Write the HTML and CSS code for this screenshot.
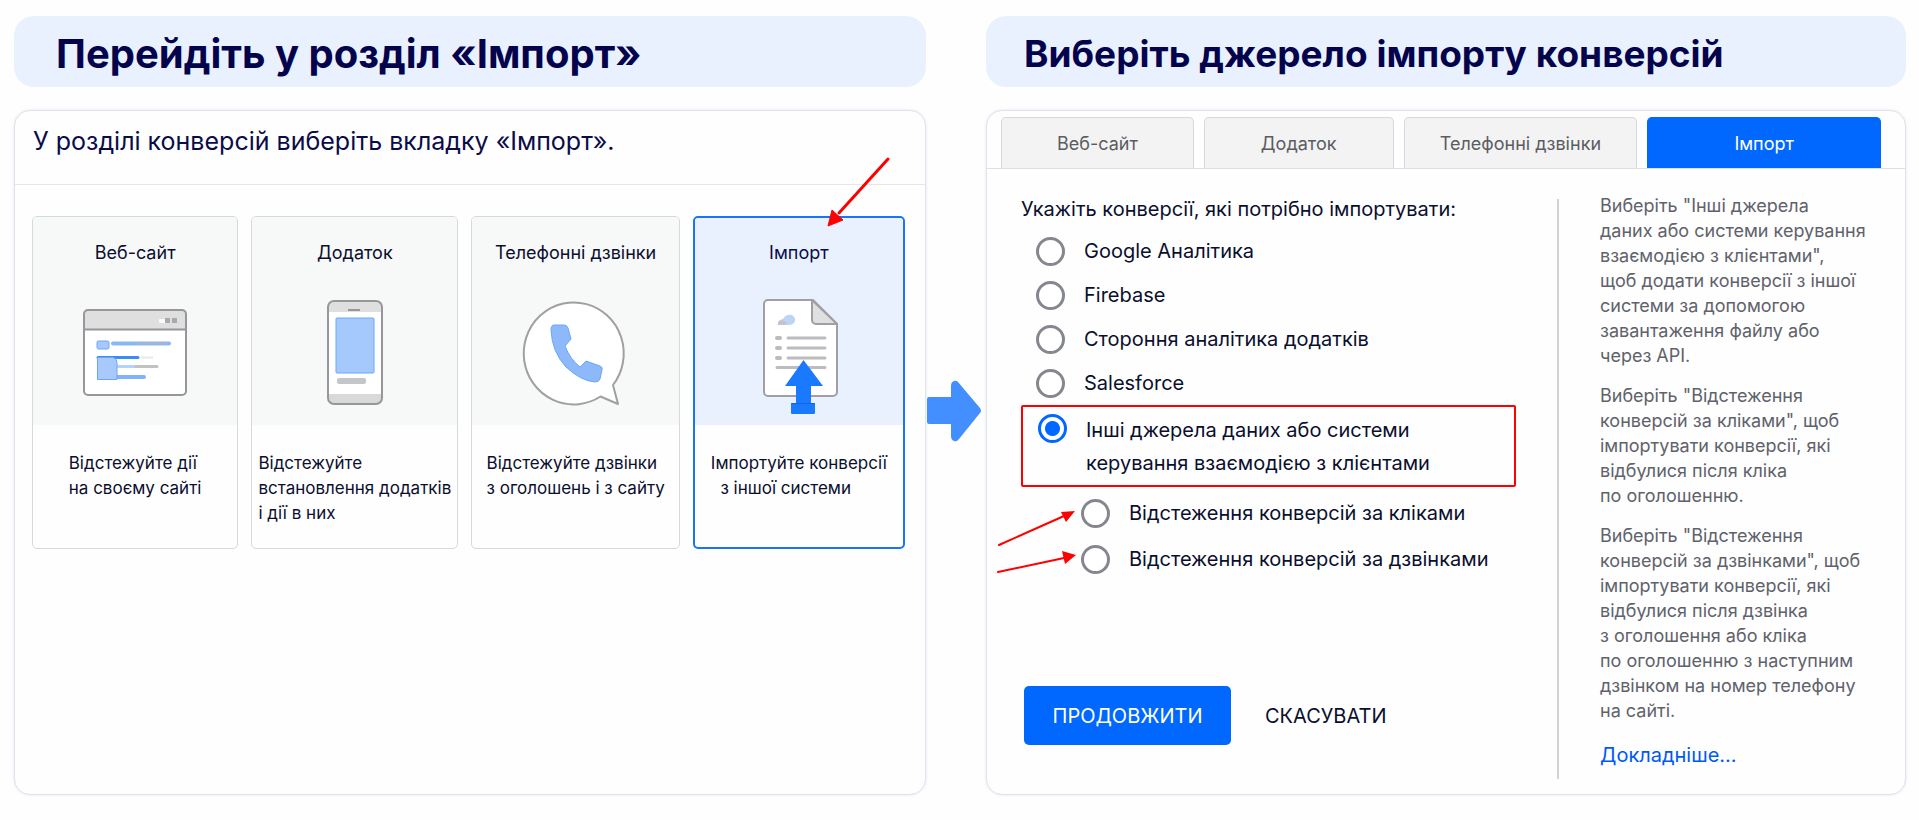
FILE: index.html
```html
<!DOCTYPE html>
<html lang="uk">
<head>
  <meta charset="UTF-8">
  <meta name="viewport" content="width=device-width, initial-scale=1.0">
  <title>Імпорт конверсій</title>
  <link rel="stylesheet" href="styles.css">
</head>
<body>
  <main class="steps">
    <h1 class="banner banner-left">Перейдіть у розділ «Імпорт»</h1>
    <h1 class="banner banner-right">Виберіть джерело імпорту конверсій</h1>

    <!-- Крок 1: вибір типу конверсії -->
    <section class="panel panel-left">
      <p class="panel-intro">У розділі конверсій виберіть вкладку «Імпорт».</p>
      <div class="cards">
        <button type="button" class="card">
          <span class="card-top">
            <span class="card-title">Веб-сайт</span>
            <svg class="card-icon" width="110" height="120" viewBox="0 0 110 120" aria-hidden="true">
              <rect x="4" y="15" width="102" height="85" rx="4" fill="#fff"/>
              <path d="M4 34V19a4 4 0 0 1 4-4h94a4 4 0 0 1 4 4v15z" fill="#dfdfe0"/>
              <rect x="4" y="15" width="102" height="85" rx="4" fill="none" stroke="#96969b" stroke-width="2"/>
              <path d="M4 34.500h102" stroke="#96969b" stroke-width="2"/>
              <rect x="79" y="24" width="7" height="4" rx="1" fill="#fafafa"/>
              <rect x="85" y="23" width="5" height="5" fill="#a9a9ad"/>
              <rect x="92" y="23" width="5" height="5" fill="#a9a9ad"/>
              <rect x="17" y="46" width="12" height="8" rx="1.500" fill="#a6c8fd" stroke="#6ba6fb"/>
              <path d="M33 48.500h56" stroke="#8ab7f8" stroke-width="4" stroke-linecap="round"/>
              <path d="M58 48.500h28" stroke="#a9b4cc" stroke-width="2"/>
              <path d="M18 62.500h40" stroke="#3a8cf8" stroke-width="3" stroke-linecap="round"/>
              <path d="M61 62.500h12" stroke="#e9e9ea" stroke-width="2"/>
              <path d="M36 71.500h20" stroke="#b4d2fd" stroke-width="3"/>
              <path d="M56 71.500h21" stroke="#c2c2c4" stroke-width="3" stroke-linecap="round"/>
              <path d="M36 82h28" stroke="#7fb3fb" stroke-width="4" stroke-linecap="round"/>
              <path d="M17.500 62.500H33q4 1 4 5v17h-19.500z" fill="#a9c9fd" stroke="#6ba6fb" stroke-linejoin="round"/>
            </svg>
          </span>
          <span class="card-text">Відстежуйте дії<br>на своєму сайті</span>
        </button>

        <button type="button" class="card">
          <span class="card-top">
            <span class="card-title">Додаток</span>
            <svg class="card-icon" width="110" height="120" viewBox="0 0 110 120" aria-hidden="true">
              <rect x="28" y="6" width="54" height="103" rx="6" fill="#fff"/>
              <path d="M28 17v-5a6 6 0 0 1 6-6h42a6 6 0 0 1 6 6v5z" fill="#dfdfe0"/>
              <path d="M28 99h54v4a6 6 0 0 1-6 6H34a6 6 0 0 1-6-6z" fill="#d9d9da"/>
              <rect x="28" y="6" width="54" height="103" rx="6" fill="none" stroke="#96969b" stroke-width="2"/>
              <path d="M48 15h12" stroke="#96969b" stroke-width="2"/>
              <rect x="36" y="23" width="38" height="55" rx="1" fill="#a5c8fd" stroke="#6ba6fb"/>
              <rect x="37" y="83" width="29" height="6" rx="2" fill="#c6c6c8"/>
            </svg>
          </span>
          <span class="card-text">Відстежуйте<br>встановлення додатків<br>і дії в них</span>
        </button>

        <button type="button" class="card">
          <span class="card-top">
            <span class="card-title">Телефонні дзвінки</span>
            <svg class="card-icon" width="110" height="120" viewBox="0 0 110 120" aria-hidden="true">
              <path d="M79.500 101.500A50 51 0 1 1 92 90l5 19z" fill="#fff" stroke="#a0a0a4" stroke-width="2" stroke-linejoin="round"/>
              <path d="M33 30h10q3 0 4 3l3 11-6 7q5 13 15 21l6-6 14 5q3 1 2 4l-2 9q-1 3-5 3Q60 86 45 72 31 57 30 35q0-5 3-5z" fill="#8db9fa" stroke="#6ba6fb" stroke-linejoin="round"/>
            </svg>
          </span>
          <span class="card-text">Відстежуйте дзвінки<br>з оголошень і з сайту</span>
        </button>

        <button type="button" class="card card-active">
          <span class="card-top">
            <span class="card-title">Імпорт</span>
            <svg class="card-icon" width="110" height="120" viewBox="0 0 110 120" aria-hidden="true">
              <path d="M24 5h45l24 24v68a4 4 0 0 1-4 4H24a4 4 0 0 1-4-4V9a4 4 0 0 1 4-4z" fill="#fff" stroke="#a0a0a4" stroke-width="2"/>
              <path d="M68 5v20a4 4 0 0 0 4 4h21z" fill="#e0e0e2" stroke="#a0a0a4" stroke-width="2" stroke-linejoin="round"/>
              <path d="M34 30q-1-5 5-6 3-5 9-4 5 3 2 8-2 2-5 2z" fill="#bcd4f8"/>
              <path d="M34 30q-1-4 4-5l5 2-1 3z" fill="#c3c5ca"/>
              <path d="M33 43h3M33 53h3M33 63h3" stroke="#bcbcc0" stroke-width="4" stroke-linecap="round"/>
              <path d="M44 43h37M44 53h37M44 63h37M33 72.500h48" stroke="#bcbcc0" stroke-width="3" stroke-linecap="round"/>
              <path d="M59.500 65 79 91H67v17h4v10q0 1-1 1H48q-1 0-1-1v-10h5V91H41z" fill="#1a7aff"/>
              <path d="M48 108.500h23" stroke="#0a66ee"/>
            </svg>
          </span>
          <span class="card-text">Імпортуйте конверсії<br>&nbsp;&nbsp;з іншої системи</span>
          <svg class="pointer pointer-card" width="70" height="76" viewBox="0 0 70 76" aria-hidden="true">
            <path d="M64 6 15 60" stroke="#fe0000" stroke-width="3" stroke-linecap="round"/>
            <path d="M4 73 8 57l11 10z" fill="#fe0000" stroke="#fe0000"/>
          </svg>
        </button>
      </div>
    </section>

    <svg class="next-arrow" width="56" height="62" viewBox="0 0 56 62" aria-hidden="true">
      <path d="M3 17h22V6q0-4 3-5 2-1 4 1l22 26q2 3 0 5L33 59q-2 3-5 2-3-1-3-5V44H3q-2 0-2-2V19q0-2 2-2z" fill="#438fff"/>
    </svg>

    <!-- Крок 2: джерело імпорту -->
    <section class="panel panel-right">
      <div class="tabs" role="tablist">
        <button type="button" class="tab" role="tab">Веб-сайт</button>
        <button type="button" class="tab" role="tab">Додаток</button>
        <button type="button" class="tab" role="tab">Телефонні дзвінки</button>
        <button type="button" class="tab tab-active" role="tab" aria-selected="true">Імпорт</button>
      </div>
      <div class="import">
        <form class="import-form">
          <p class="form-title">Укажіть конверсії, які потрібно імпортувати:</p>
          <div class="option">
            <input type="radio" name="source" id="srcGoogle">
            <label for="srcGoogle">Google Аналітика</label>
          </div>
          <div class="option">
            <input type="radio" name="source" id="srcFirebase">
            <label for="srcFirebase">Firebase</label>
          </div>
          <div class="option">
            <input type="radio" name="source" id="srcThirdParty">
            <label for="srcThirdParty">Стороння аналітика додатків</label>
          </div>
          <div class="option">
            <input type="radio" name="source" id="srcSalesforce">
            <label for="srcSalesforce">Salesforce</label>
          </div>
          <div class="option option-marked">
            <input type="radio" name="source" id="srcOther" checked>
            <label for="srcOther">Інші джерела даних або системи<br>керування взаємодією з клієнтами</label>
          </div>
          <div class="suboptions">
            <div class="option">
              <input type="radio" name="tracking" id="trackClicks">
              <label for="trackClicks">Відстеження конверсій за кліками</label>
            </div>
            <div class="option">
              <input type="radio" name="tracking" id="trackCalls">
              <label for="trackCalls">Відстеження конверсій за дзвінками</label>
            </div>
            <svg class="pointer pointer-options" width="84" height="72" viewBox="0 0 84 72" aria-hidden="true">
              <path d="M3 40 68 11M2 67l66-14" stroke="#fe0000" stroke-width="2" stroke-linecap="round"/>
              <path d="M79 6 65 7l5 10zM80 50l-14-4 3 13z" fill="#fe0000"/>
            </svg>
          </div>
          <div class="actions">
            <button type="button" class="btn btn-primary">ПРОДОВЖИТИ</button>
            <button type="button" class="btn btn-text">СКАСУВАТИ</button>
          </div>
        </form>
        <aside class="help">
          <p>Виберіть "Інші джерела<br>даних або системи керування<br>взаємодією з клієнтами",<br>щоб додати конверсії з іншої<br>системи за допомогою<br>завантаження файлу або<br>через API.</p>
          <p>Виберіть "Відстеження<br>конверсій за кліками", щоб<br>імпортувати конверсії, які<br>відбулися після кліка<br>по оголошенню.</p>
          <p>Виберіть "Відстеження<br>конверсій за дзвінками", щоб<br>імпортувати конверсії, які<br>відбулися після дзвінка<br>з оголошення або кліка<br>по оголошенню з наступним<br>дзвінком на номер телефону<br>на сайті.</p>
          <a href="#" class="help-link">Докладніше...</a>
        </aside>
      </div>
    </section>
  </main>
</body>
</html>
```
FILE: styles.css
```css
/* Загальні стилі */
* {
  box-sizing: border-box;
}
body {
  margin: 0;
  background: #fefefe;
  color: #0b0f2e;
  font-family: Inter, "Liberation Sans", sans-serif;
  font-size: 20px;
}
button {
  font-family: inherit;
  color: inherit;
  cursor: pointer;
}
p {
  margin: 0;
}
/* Сітка: крок 1, стрілка, крок 2 */
.steps {
  display: grid;
  grid-template-columns: minmax(0, 912fr) 60px minmax(0, 920fr);
  row-gap: 23px;
  padding: 16px 13px 26px 14px;
}
.banner {
  margin: 0;
  padding: 5px 38px 0;
  border-radius: 20px;
  background: #e9f1fe;
  color: #04044d;
  font-weight: 700;
  line-height: 66px;
}
.banner-left {
  padding-left: 42px;
  font-size: 40px;
}
.banner-right {
  grid-column: 3;
  font-size: 37px;
}
.panel {
  border: 1px solid #dfe3ec;
  border-radius: 16px;
  background: #fefefe;
  box-shadow: 0 0 3px rgba(120, 140, 190, 0.2);
}
.panel-right {
  grid-column: 3;
}
.next-arrow {
  margin-top: 270px;
}
/* Картки типів конверсій */
.panel-intro {
  padding: 0 18px;
  height: 74px;
  border-bottom: 1px solid #e4e7ee;
  color: #0a0c48;
  font-size: 25px;
  line-height: 60px;
}
.cards {
  display: grid;
  grid-template-columns: 206fr 207fr 208fr 212fr;
  gap: 13px;
  padding: 31px 20px 0 17px;
}
.card {
  display: flex;
  flex-direction: column;
  position: relative;
  height: 333px;
  padding: 0;
  border: 1px solid #d5d8e0;
  border-radius: 5px;
  background: #fefefe;
}
.card-top {
  display: flex;
  flex-direction: column;
  align-items: center;
  width: 100%;
  height: 208px;
  padding-top: 24px;
  border-radius: 4px 4px 0 0;
  background: #f7f8f8;
}
.card-title {
  font-size: 18px;
  line-height: 24px;
}
.card-icon {
  margin-top: 30px;
}
.card-text {
  align-self: center;
  padding-top: 26px;
  font-size: 17px;
  line-height: 25px;
  text-align: left;
  white-space: nowrap;
}
.card-active {
  border: 2px solid #1a73f8;
}
.card-active .card-top {
  height: 207px;
  padding-top: 23px;
  background: #e9f1fe;
}
.card-active .card-title {
  color: #0a0c48;
}
/* Червоні вказівники */
.pointer {
  position: absolute;
  fill: none;
  pointer-events: none;
}
.pointer-card {
  top: -65px;
  right: 9px;
}
.pointer-options {
  top: 18px;
  left: -25px;
}
/* Вкладки */
.tabs {
  display: grid;
  grid-template-columns: 193fr 190fr 234fr 234fr;
  gap: 10px;
  padding: 6px 24px 0 14px;
  border-bottom: 1px solid #dcdfe5;
}
.tab {
  height: 51px;
  padding: 0;
  border: 1px solid #d5d8e0;
  border-bottom: none;
  border-radius: 5px 5px 0 0;
  background: #f3f3f4;
  color: #5b5c62;
  font-size: 18px;
}
.tab-active {
  border-color: #0068ff;
  background: #0068ff;
  color: #fff;
}
/* Форма імпорту */
.import {
  display: grid;
  grid-template-columns: minmax(0, 572fr) minmax(0, 346fr);
  padding: 24px 0 15px;
}
.import-form {
  margin-top: 6px;
  padding-left: 34px;
  border-right: 2px solid #cfd2d9;
}
.form-title {
  padding-bottom: 10px;
  line-height: 20px;
}
.option {
  display: flex;
  align-items: center;
  gap: 19px;
  height: 44px;
  padding-left: 15px;
}
.option input {
  appearance: none;
  flex: none;
  width: 29px;
  height: 29px;
  margin: 0;
  border: 3px solid #85878f;
  border-radius: 50%;
  background: #fff;
}
.option input:checked {
  border-color: #0068ff;
  background: radial-gradient(circle, #0068ff 7px, #fff 8px);
}
.option-marked {
  align-items: flex-start;
  width: 495px;
  max-width: 100%;
  height: auto;
  padding: 7px 15px 5px;
  border: 2px solid #fe0000;
  border-radius: 2px;
}
.option-marked label {
  line-height: 33px;
}
.suboptions {
  position: relative;
  padding: 3px 0 0 45px;
}
.suboptions .option {
  height: 46px;
}
.actions {
  display: flex;
  gap: 34px;
  margin-top: 104px;
  padding-left: 3px;
}
.btn {
  height: 59px;
  padding: 0;
  border: none;
  background: none;
  font-size: 20px;
}
.btn-primary {
  width: 207px;
  border-radius: 5px;
  background: #0068ff;
  color: #fff;
}
/* Довідка */
.help {
  padding: 0 0 11px 41px;
  color: #60626b;
  font-size: 18px;
  line-height: 25px;
  white-space: nowrap;
}
.help p {
  margin-bottom: 15px;
}
.help-link {
  display: inline-block;
  margin-top: 5px;
  color: #0058f5;
  font-size: 20px;
  text-decoration: none;
}
```
